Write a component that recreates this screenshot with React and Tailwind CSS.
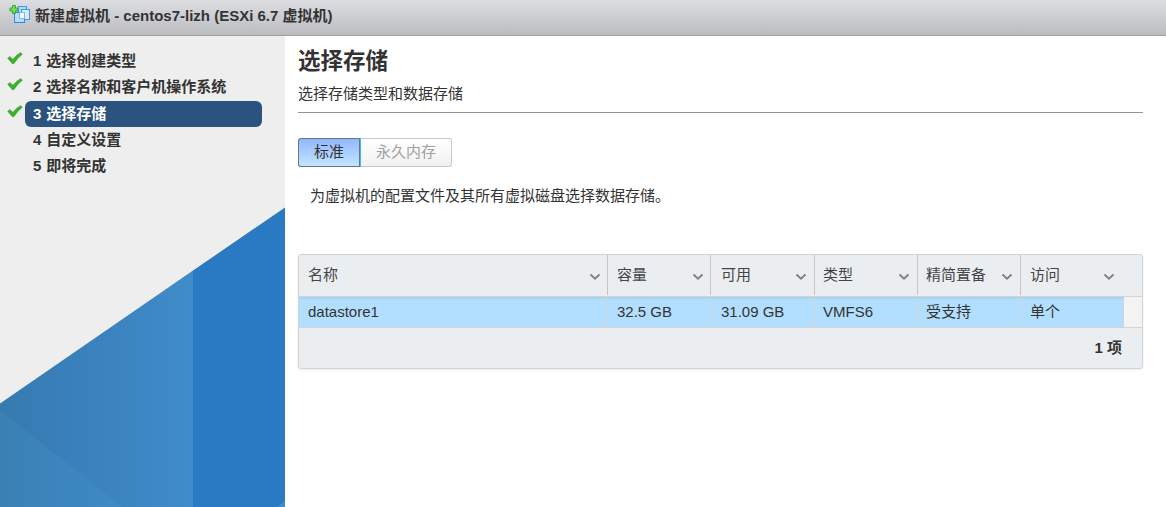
import React from 'react';

const steps = [
  { id: 1, label: '选择创建类型', done: true },
  { id: 2, label: '选择名称和客户机操作系统', done: true },
  { id: 3, label: '选择存储', done: true, current: true },
  { id: 4, label: '自定义设置' },
  { id: 5, label: '即将完成' }
];

const columns = [
  { key: 'name', title: '名称' },
  { key: 'capacity', title: '容量' },
  { key: 'free', title: '可用' },
  { key: 'type', title: '类型' },
  { key: 'thin', title: '精简置备' },
  { key: 'access', title: '访问' }
];

const datastores = [
  { name: 'datastore1', capacity: '32.5 GB', free: '31.09 GB', type: 'VMFS6', thin: '受支持', access: '单个' }
];

function NewVmIcon() {
  return (
    <svg width="22" height="20" viewBox="0 0 22 20" className="shrink-0">
      <rect x="9.5" y="1.5" width="8" height="9" fill="#a9d6fb" stroke="#4a97e6" />
      <rect x="12.5" y="4.5" width="8" height="10" fill="#d5ecff" stroke="#4a97e6" />
      <rect x="5.500" y="7.500" width="10" height="10" fill="#b5dcfc" stroke="#3486de" />
      <path d="M10.500 7.500h5v6h-5z" fill="#f2faff" stroke="#7db9f0" />
      <path d="M3.500 0.500h3v2.500H9v3H6.500v2.500h-3V6H1V3h2.500z" fill="#6fdc5a" stroke="#2ea526" strokeWidth="0.9" />
    </svg>
  );
}

function DoneIcon() {
  return (
    <svg width="16" height="13" viewBox="0 0 16 13">
      <path d="M0.600 6.300 2.800 4.400 5.900 7.200Q8.900 3.200 13.600 0.600L15.400 2.300Q10.300 6 6.900 11.800L5.300 11.800Z" fill="#3bb02c" stroke="#2f9e24" strokeWidth="0.4" />
    </svg>
  );
}

function Chevron() {
  return (
    <svg width="12" height="8" viewBox="0 0 12 8" className="mt-1 shrink-0">
      <path d="M1.500 1.500 6 5.700l4.500-4.200" fill="none" stroke="#7d8185" strokeWidth="1.900" />
    </svg>
  );
}

function Sidebar() {
  return (
    <div className="relative w-[285px] shrink-0 bg-[#eeeeee]">
      <svg width="285" height="300" viewBox="0 0 285 300" className="absolute bottom-0 left-0">
        <defs>
          <linearGradient id="mid" x1="0" x2="193" y1="0" y2="0" gradientUnits="userSpaceOnUse">
            <stop offset="0" stopColor="#367aae" />
            <stop offset="0.4" stopColor="#3a80bc" />
            <stop offset="1" stopColor="#3f8cc9" />
          </linearGradient>
          <linearGradient id="low" x1="0" x2="120" y1="0" y2="0" gradientUnits="userSpaceOnUse">
            <stop offset="0" stopColor="#3a80b4" />
            <stop offset="1" stopColor="#3e8ac6" />
          </linearGradient>
        </defs>
        <path d="M0 196.500 193 63.500V300H0z" fill="url(#mid)" />
        <path d="M0 203 122 300H0z" fill="url(#low)" />
        <path d="M193 63.500 285 0.500V300H193z" fill="#2a7ac3" />
        <path d="M277 300 285 294V300z" fill="#3f8ccb" />
      </svg>
      <div className="relative flex flex-col pt-[12px]">
        {steps.map((step) => (
          <div key={step.id} className={`flex h-[26px] ${step.current ? 'mt-px' : ''}`}>
            <div className="w-[25px] pl-[7px] pt-[4px]">{step.done && <DoneIcon />}</div>
            <div
              className={`flex h-[26px] w-[237px] items-center gap-[5px] rounded-[6px] pl-2 font-bold ${
                step.current ? 'bg-[#2a547f] text-white' : ''
              }`}
            >
              <span>{step.id}</span>
              <span>{step.label}</span>
            </div>
          </div>
        ))}
      </div>
    </div>
  );
}

function DatastoreGrid() {
  const cols = 'grid grid-cols-[309px_103px_104px_103px_103px_103px_1fr]';
  return (
    <div className="mt-12 rounded-[3px] border border-[#d4d4d4] bg-[#ebeef1] shadow-[0_1px_3px_rgba(0,0,0,0.08)]">
      <div className={`${cols} h-[42px] border-b border-[#d4d4d4] pb-px text-[#454545]`}>
        {columns.map((col) => (
          <div
            key={col.key}
            className="flex items-center justify-between border-r border-[#c5c5c5] pl-[9px] pr-[6px] nth-3:pl-[10px] nth-3:pr-[7px] nth-4:pl-2 nth-4:pr-[7px] nth-5:pl-2 nth-5:pr-[7px] nth-6:border-transparent nth-6:pr-2"
          >
            <span>{col.title}</span>
            <Chevron />
          </div>
        ))}
      </div>
      {datastores.map((row) => (
        <div key={row.name} className={`${cols} h-[31px] border-b border-[#d4d4d4] bg-[#f3f3f3]`}>
          {columns.map((col) => (
            <div
              key={col.key}
              className="flex items-center border-r border-[#d4d4d4] bg-[#b2dfff] bg-linear-to-b from-[#a2cfea] to-[#b2dfff] to-[3px] pl-[9px] nth-3:pl-[10px] nth-4:pl-2 nth-5:pl-2"
            >
              {row[col.key]}
            </div>
          ))}
        </div>
      ))}
      <div className="flex h-10 items-center justify-end pr-5 font-bold">1 项</div>
    </div>
  );
}

export default function App() {
  return (
    <div className="flex h-[507px] w-[1166px] flex-col overflow-hidden bg-white font-['Liberation_Sans','Noto_Sans_CJK_SC',sans-serif] text-[15px] leading-[20px] text-[#333333]">
      <div className="flex h-9 shrink-0 items-center border-b border-[#a0a0a0] bg-linear-to-b from-[#dddee2] to-[#bbbcc0] pb-[5px] pl-[9px] font-bold">
        <NewVmIcon />
        <span className="ml-1 pt-[2px]">新建虚拟机 - centos7-lizh (ESXi 6.7 虚拟机)</span>
      </div>

      <div className="flex flex-1">
        <Sidebar />

        <div className="flex-1 pl-[13px] pr-[23px] pt-[11px]">
          <h1 className="text-[22.5px] font-bold leading-[30px]">选择存储</h1>
          <div className="mt-[7px] border-b border-[#939393] pb-[8px]">选择存储类型和数据存储</div>

          <div className="mt-[25px] flex h-[29px]">
            <div className="w-[63px] rounded-l-[3px] bg-[#2cc3f5] pr-px">
              <button className="h-full w-full rounded-l-[3px] border border-[#6b7682] bg-linear-to-b from-[#92b7ff] to-[#c3e6ff] pb-[2px]">
                标准
              </button>
            </div>
            <button className="w-[91px] rounded-r-[3px] border border-l-0 border-[#c8c8c8] bg-linear-to-b from-white to-[#f1f1f1] pb-[2px] text-[#a0a0a0]">
              永久内存
            </button>
          </div>

          <p className="mt-[19px] pl-[12px]">为虚拟机的配置文件及其所有虚拟磁盘选择数据存储。</p>

          <DatastoreGrid />
        </div>
      </div>
    </div>
  );
}
